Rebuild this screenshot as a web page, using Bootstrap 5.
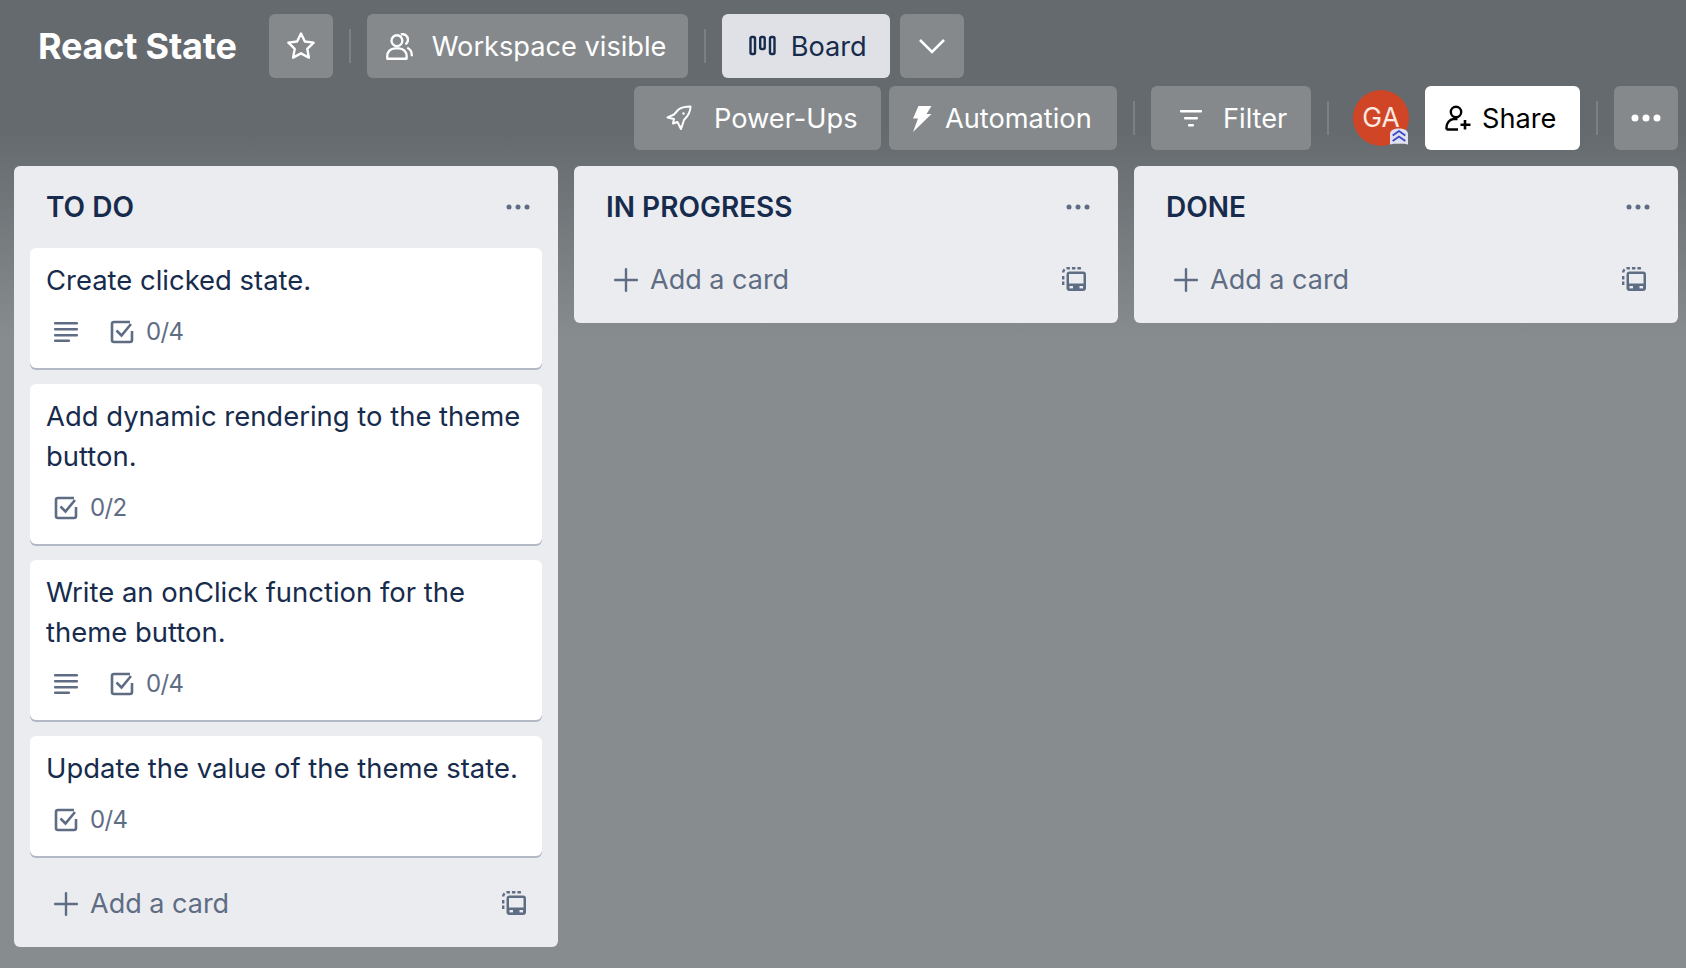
<!DOCTYPE html>
<html lang="en">
<head>
<meta charset="utf-8">
<title>React State</title>
<link href="https://cdn.jsdelivr.net/npm/bootstrap@5.3.0/dist/css/bootstrap.min.css" rel="stylesheet">
<style>
html,body{height:100%}
body{font-family:Inter,"Liberation Sans",sans-serif;background:linear-gradient(#656a6e 0,#656a6e 130px,#878c8f 340px,#878c8f 100%);color:#172b4d;height:968px;overflow:hidden}
.board-page{padding:14px 8px 0 14px}
.bar-row{height:64px;gap:8px}
.bar-row+.bar-row{margin-top:8px}
.board-name{font-size:36px;font-weight:700;color:#fff;margin:0 24px 0 24px;line-height:64px;letter-spacing:-.2px}
.bar-btn{height:64px;border:0;border-radius:6px;background:#85898c;color:#fff;font-size:27.2px;line-height:40px;padding:0;display:inline-flex;align-items:center;flex:none;white-space:nowrap}
.bar-btn span{padding-top:1px}
.bar-btn:hover,.bar-btn:active{background:#85898c!important;color:#fff!important}
.bar-sep{width:2px;height:34px;background:#7b8083;margin:0 8px;flex:none}
.sq-btn{width:64px;justify-content:center}
.btn-vis{width:321px;padding-left:17px}.btn-vis span{margin-left:17px}
.bar-btn.btn-board,.bar-btn.btn-board:hover{background:#dfe1e6!important;color:#172b4d!important;width:168px;padding-left:27px}.btn-board span{margin-left:15px}
.btn-chev{margin-left:2px}
.btn-pow{width:247px;padding-left:32px}.btn-pow span{margin-left:22px}
.btn-auto{width:228px;padding-left:23px}.btn-auto span{margin-left:13px}
.btn-filter{width:160px;padding-left:29px}.btn-filter span{margin-left:21px}
.bar-btn.btn-share,.bar-btn.btn-share:hover{background:#fff!important;color:#000!important;width:155px;padding-left:20px}.btn-share span{margin-left:11px}
.user-pic{position:relative;width:56px;height:56px;border-radius:50%;background:#cf4525;color:#fde9e2;font-size:26.5px;display:flex;align-items:center;justify-content:center;margin:0 8px;flex:none}
.user-pic svg{position:absolute;right:1px;bottom:1px}
.lists{margin-top:16px;gap:16px;align-items:flex-start}
.task-list{width:544px;background:#ebecf0;border-radius:6px;padding-bottom:11px;flex:none}
.list-top{height:82px;padding:0 28px 1px 32px}
.list-name{font-size:28px;font-weight:600;margin:0;line-height:40px;text-transform:uppercase}
.task-card{margin:0 16px 16px;background:#fff;border-radius:6px;box-shadow:0 2px 0 #091e4240;padding:12px 16px 16px;font-size:27.45px;line-height:40px}
.task-meta{height:40px;margin-top:12px;padding-left:8px;gap:32px;color:#5e6c84;font-size:24px;letter-spacing:-.6px}
.meta-item{gap:12px}
.add-row{height:64px;margin:0 16px;padding:0 16px 0 24px;color:#5e6c84;font-size:27px}
.add-row .add-label{margin-left:12px}
.add-row .ms-auto{margin-top:-2px}
.task-meta svg,.add-row svg{flex:none}
</style>
</head>
<body>
<div class="board-page">
  <div class="d-flex align-items-center bar-row">
    <h1 class="board-name">React State</h1>
    <button class="btn bar-btn sq-btn" aria-label="Star"><svg width="32" height="32" viewBox="0 0 24 24" fill="none" stroke="#fff" stroke-width="1.800" stroke-linejoin="round"><path d="M12 2.600l2.900 6 6.600.9-4.800 4.600 1.200 6.600-5.900-3.200-5.900 3.200 1.200-6.600-4.800-4.600 6.600-.9z"/></svg></button>
    <div class="bar-sep"></div>
    <button class="btn bar-btn btn-vis"><svg width="31" height="31" viewBox="0 0 24 24" fill="none" stroke="#fff" stroke-width="1.800"><circle cx="10" cy="7.500" r="4.200"/><path d="M2.500 21.500v-2c0-3.500 2.500-6 6-6h3c3.500 0 6 2.500 6 6v2z" stroke-linejoin="round"/><path d="M13 2.700c3-.8 5.500 1 5.500 4 0 1.500-.7 2.800-2 3.500M18 13c2.200 1 3.500 3 3.500 5.500v1"/></svg><span>Workspace visible</span></button>
    <div class="bar-sep"></div>
    <button class="btn bar-btn btn-board"><svg width="27" height="22" viewBox="0 0 27 22" fill="none" stroke="#172b4d" stroke-width="2.400"><rect x="1.500" y="2" width="4.500" height="17" rx="1.500"/><rect x="11.200" y="2" width="4.500" height="12" rx="1.500"/><rect x="21" y="2" width="4.500" height="17" rx="1.500"/></svg><span>Board</span></button>
    <button class="btn bar-btn sq-btn btn-chev" aria-label="More views"><svg width="28" height="18" viewBox="0 0 28 18" fill="none" stroke="#fff" stroke-width="2.600"><path d="M2 3l12 12L26 3"/></svg></button>
  </div>
  <div class="d-flex align-items-center justify-content-end bar-row">
    <button class="btn bar-btn btn-pow"><svg width="26" height="26" viewBox="0 0 26 26" fill="none" stroke="#fff" stroke-width="2" stroke-linejoin="round"><path d="M24.500 1.500C19 1.500 15 2.500 12 5L8 9.500l-6.500 3 6.500 1.500-1 4.500 4.500-1.500 3.500 7 3-9c4-4 6.500-8 6.500-13.500z"/><circle cx="17.500" cy="8.500" r="1.200" fill="#fff" stroke="none"/></svg><span>Power-Ups</span></button>
    <button class="btn bar-btn btn-auto"><svg width="20" height="27" viewBox="0 0 20 27" fill="#fff"><path d="M6.500 1h13l-5 8h5L1 27l5-13.500H1z"/></svg><span>Automation</span></button>
    <div class="bar-sep"></div>
    <button class="btn bar-btn btn-filter"><svg width="22" height="18" viewBox="0 0 22 18" fill="#fff"><rect y="1" width="22" height="2.400" rx="1"/><rect x="4" y="8" width="14" height="2.400" rx="1"/><rect x="8" y="15" width="6" height="2.400" rx="1"/></svg><span>Filter</span></button>
    <div class="bar-sep"></div>
    <div class="user-pic">GA<svg width="18" height="17" viewBox="0 0 20 18"><path d="M0 6c0-4 5-6 10-6s10 2 10 6v12l-4-1H4l-4 1z" fill="#dfe1f0"/><path d="M3 8l7-5 7 5M3 14l7-5 7 5" fill="none" stroke="#3a43c4" stroke-width="2"/></svg></div>
    <button class="btn bar-btn btn-share"><svg width="26" height="26" viewBox="0 0 26 26" fill="none" stroke="#000" stroke-width="2.400"><circle cx="11" cy="7" r="5.200"/><path d="M1.500 24.500v-2c0-4.500 3-8 7-8.500h4M1.500 24.500H13"/><path d="M20 15v9.500M15.500 19.700h10" stroke-width="2.600"/></svg><span>Share</span></button>
    <div class="bar-sep"></div>
    <button class="btn bar-btn sq-btn" aria-label="Menu"><svg width="30" height="8" viewBox="0 0 30 8" fill="#fff"><circle cx="4" cy="4" r="3.500"/><circle cx="15" cy="4" r="3.500"/><circle cx="26" cy="4" r="3.500"/></svg></button>
  </div>
  <div class="d-flex lists">
    <section class="task-list">
      <div class="list-top d-flex align-items-center justify-content-between"><h2 class="list-name">To do</h2><svg width="24" height="6" viewBox="0 0 24 6" fill="#5e6c84"><circle cx="3" cy="3" r="2.500"/><circle cx="12" cy="3" r="2.500"/><circle cx="21" cy="3" r="2.500"/></svg></div>
      <div class="task-card">Create clicked state.
        <div class="task-meta d-flex align-items-center">
          <svg width="24" height="20" viewBox="0 0 24 20" fill="#5e6c84"><rect y="0" width="24" height="2.500" rx="1"/><rect y="6" width="24" height="2.500" rx="1"/><rect y="12" width="24" height="2.500" rx="1"/><rect y="17.500" width="16" height="2.500" rx="1"/></svg>
          <div class="meta-item d-flex align-items-center"><svg width="24" height="24" viewBox="0 0 24 24" fill="none" stroke="#5e6c84" stroke-width="2.600"><path d="M22 11v9a2 2 0 0 1-2 2H4a2 2 0 0 1-2-2V4a2 2 0 0 1 2-2h16"/><path d="M6.500 10.500l5 5 9.500-11.500"/></svg><span>0/4</span></div>
        </div>
      </div>
      <div class="task-card">Add dynamic rendering to the theme button.
        <div class="task-meta d-flex align-items-center">
          <div class="meta-item d-flex align-items-center"><svg width="24" height="24" viewBox="0 0 24 24" fill="none" stroke="#5e6c84" stroke-width="2.600"><path d="M22 11v9a2 2 0 0 1-2 2H4a2 2 0 0 1-2-2V4a2 2 0 0 1 2-2h16"/><path d="M6.500 10.500l5 5 9.500-11.500"/></svg><span>0/2</span></div>
        </div>
      </div>
      <div class="task-card">Write an onClick function for the theme button.
        <div class="task-meta d-flex align-items-center">
          <svg width="24" height="20" viewBox="0 0 24 20" fill="#5e6c84"><rect y="0" width="24" height="2.500" rx="1"/><rect y="6" width="24" height="2.500" rx="1"/><rect y="12" width="24" height="2.500" rx="1"/><rect y="17.500" width="16" height="2.500" rx="1"/></svg>
          <div class="meta-item d-flex align-items-center"><svg width="24" height="24" viewBox="0 0 24 24" fill="none" stroke="#5e6c84" stroke-width="2.600"><path d="M22 11v9a2 2 0 0 1-2 2H4a2 2 0 0 1-2-2V4a2 2 0 0 1 2-2h16"/><path d="M6.500 10.500l5 5 9.500-11.500"/></svg><span>0/4</span></div>
        </div>
      </div>
      <div class="task-card">Update the value of the theme state.
        <div class="task-meta d-flex align-items-center">
          <div class="meta-item d-flex align-items-center"><svg width="24" height="24" viewBox="0 0 24 24" fill="none" stroke="#5e6c84" stroke-width="2.600"><path d="M22 11v9a2 2 0 0 1-2 2H4a2 2 0 0 1-2-2V4a2 2 0 0 1 2-2h16"/><path d="M6.500 10.500l5 5 9.500-11.500"/></svg><span>0/4</span></div>
        </div>
      </div>
      <div class="add-row d-flex align-items-center"><svg width="24" height="24" viewBox="0 0 24 24" fill="#5e6c84"><rect x="10.800" width="2.400" height="24" rx="1"/><rect y="10.800" width="24" height="2.400" rx="1"/></svg><span class="add-label">Add a card</span><svg class="ms-auto" width="24" height="24" viewBox="0 0 24 24"><path d="M1.200 18V7M1.200 5.500a4.300 4.300 0 0 1 4.300-4.300H20" fill="none" stroke="#5e6c84" stroke-width="2.400" stroke-dasharray="3.500 2"/><rect x="4.500" y="4.500" width="19.500" height="19.500" rx="3" fill="#5e6c84"/><rect x="7" y="7" width="14.500" height="9.500" fill="#ebecf0"/><rect x="7.500" y="19" width="3.500" height="2.400" fill="#ebecf0"/><rect x="17.500" y="19" width="3.500" height="2.400" fill="#ebecf0"/></svg></div>
    </section>
    <section class="task-list">
      <div class="list-top d-flex align-items-center justify-content-between"><h2 class="list-name">In progress</h2><svg width="24" height="6" viewBox="0 0 24 6" fill="#5e6c84"><circle cx="3" cy="3" r="2.500"/><circle cx="12" cy="3" r="2.500"/><circle cx="21" cy="3" r="2.500"/></svg></div>
      <div class="add-row d-flex align-items-center"><svg width="24" height="24" viewBox="0 0 24 24" fill="#5e6c84"><rect x="10.800" width="2.400" height="24" rx="1"/><rect y="10.800" width="24" height="2.400" rx="1"/></svg><span class="add-label">Add a card</span><svg class="ms-auto" width="24" height="24" viewBox="0 0 24 24"><path d="M1.200 18V7M1.200 5.500a4.300 4.300 0 0 1 4.300-4.300H20" fill="none" stroke="#5e6c84" stroke-width="2.400" stroke-dasharray="3.500 2"/><rect x="4.500" y="4.500" width="19.500" height="19.500" rx="3" fill="#5e6c84"/><rect x="7" y="7" width="14.500" height="9.500" fill="#ebecf0"/><rect x="7.500" y="19" width="3.500" height="2.400" fill="#ebecf0"/><rect x="17.500" y="19" width="3.500" height="2.400" fill="#ebecf0"/></svg></div>
    </section>
    <section class="task-list">
      <div class="list-top d-flex align-items-center justify-content-between"><h2 class="list-name">Done</h2><svg width="24" height="6" viewBox="0 0 24 6" fill="#5e6c84"><circle cx="3" cy="3" r="2.500"/><circle cx="12" cy="3" r="2.500"/><circle cx="21" cy="3" r="2.500"/></svg></div>
      <div class="add-row d-flex align-items-center"><svg width="24" height="24" viewBox="0 0 24 24" fill="#5e6c84"><rect x="10.800" width="2.400" height="24" rx="1"/><rect y="10.800" width="24" height="2.400" rx="1"/></svg><span class="add-label">Add a card</span><svg class="ms-auto" width="24" height="24" viewBox="0 0 24 24"><path d="M1.200 18V7M1.200 5.500a4.300 4.300 0 0 1 4.300-4.300H20" fill="none" stroke="#5e6c84" stroke-width="2.400" stroke-dasharray="3.500 2"/><rect x="4.500" y="4.500" width="19.500" height="19.500" rx="3" fill="#5e6c84"/><rect x="7" y="7" width="14.500" height="9.500" fill="#ebecf0"/><rect x="7.500" y="19" width="3.500" height="2.400" fill="#ebecf0"/><rect x="17.500" y="19" width="3.500" height="2.400" fill="#ebecf0"/></svg></div>
    </section>
  </div>
</div>
<script src="https://cdn.jsdelivr.net/npm/bootstrap@5.3.0/dist/js/bootstrap.bundle.min.js"></script>
</body>
</html>
